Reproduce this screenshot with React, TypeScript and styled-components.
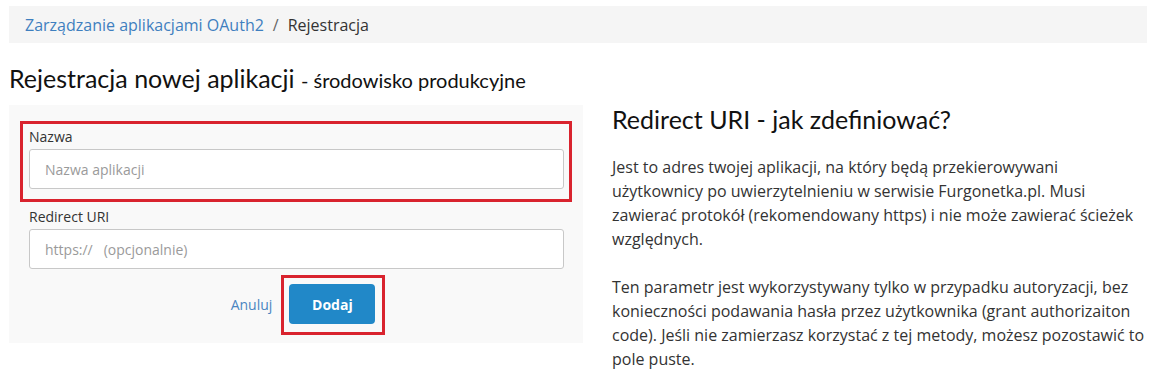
import React from "react";
import styled, { createGlobalStyle } from "styled-components";

const Global = createGlobalStyle`
  html, body { margin: 0; padding: 0; background: #fff; }
  body { font-family: "Open Sans", "Noto Sans", sans-serif; color: #333; }
  * { box-sizing: border-box; }
`;

const Page = styled.div`
  padding: 6px 8px 0 9px;
  width: 1155px;
`;

const Breadcrumb = styled.nav`
  display: flex;
  align-items: center;
  gap: 9px;
  height: 37px;
  padding: 0 16px;
  background: #f5f5f5;
  font-size: 16px;
`;

const Crumb = styled.a`
  color: #3f7fbf;
  text-decoration: none;
`;

const Sep = styled.span`
  color: #666;
`;

const Current = styled.span`
  color: #333;
`;

const Title = styled.h1`
  margin: 20px 0 0;
  height: 42px;
  font-family: Lato, "Open Sans", sans-serif;
  font-weight: 400;
  font-size: 25px;
  line-height: 30px;
  color: #111;
`;

const Sub = styled.small`
  font-size: 20px;
`;

const Row = styled.div`
  display: grid;
  grid-template-columns: 574px 1fr;
  align-items: start;
  gap: 29px;
`;

const Panel = styled.form`
  background: #f9f9f9;
  padding: 22px 19px 19px 20px;
  display: flex;
  flex-direction: column;
`;

const Field = styled.div<{ $mark?: boolean }>`
  position: relative;
  display: flex;
  flex-direction: column;
  gap: 2px;
  margin-bottom: ${(p) => (p.$mark ? "18px" : "15px")};
  ${(p) =>
    p.$mark &&
    `&::after {
      content: "";
      position: absolute;
      inset: -6px -8px -13px -9px;
      border: 3px solid #d9232e;
      pointer-events: none;
    }`}
`;

const Label = styled.label`
  font-size: 14px;
  line-height: 20px;
  color: #333;
`;

const Input = styled.input`
  height: 40px;
  border: 1px solid #c8c8c8;
  border-radius: 3px;
  background: #fff;
  padding: 0 15px;
  font-family: "Open Sans", sans-serif;
  font-size: 14px;
  color: #333;
  &::placeholder { color: #9a9a9a; }
`;

const Actions = styled.div`
  display: flex;
  justify-content: center;
  align-items: center;
  gap: 17px;
  padding-left: 13px;
`;

const Cancel = styled.a`
  color: #4a86c1;
  font-size: 14px;
  text-decoration: none;
`;

const Marked = styled.div`
  position: relative;
  &::after {
    content: "";
    position: absolute;
    inset: -9px -10px -11px -8px;
    border: 3px solid #d9232e;
    pointer-events: none;
  }
`;

const Button = styled.button`
  width: 86px;
  height: 40px;
  border: 0;
  border-radius: 4px;
  background: #2188c8;
  color: #fff;
  font-family: "Open Sans", sans-serif;
  font-weight: 700;
  font-size: 14px;
`;

const Side = styled.section`
  padding-top: 0;
`;

const SideTitle = styled.h2`
  margin: 0 0 22px;
  font-family: Lato, "Open Sans", sans-serif;
  font-weight: 400;
  font-size: 25px;
  line-height: 28px;
  color: #111;
`;

const Para = styled.p`
  margin: 0 0 24px;
  font-size: 16px;
  line-height: 24px;
  color: #333;
`;

export default function App() {
  return (
    <Page>
      <Global />
      <Breadcrumb>
        <Crumb href="#">Zarządzanie aplikacjami OAuth2</Crumb>
        <Sep>/</Sep>
        <Current>Rejestracja</Current>
      </Breadcrumb>
      <Title>
        Rejestracja nowej aplikacji <Sub>- środowisko produkcyjne</Sub>
      </Title>
      <Row>
        <Panel onSubmit={(e) => e.preventDefault()}>
          <Field $mark>
            <Label>Nazwa</Label>
            <Input placeholder="Nazwa aplikacji" />
          </Field>
          <Field>
            <Label>Redirect URI</Label>
            <Input placeholder="https://   (opcjonalnie)" />
          </Field>
          <Actions>
            <Cancel href="#">Anuluj</Cancel>
            <Marked>
              <Button type="submit">Dodaj</Button>
            </Marked>
          </Actions>
        </Panel>
        <Side>
          <SideTitle>Redirect URI - jak zdefiniować?</SideTitle>
          <Para>
            Jest to adres twojej aplikacji, na który będą przekierowywani
            użytkownicy po uwierzytelnieniu w serwisie Furgonetka.pl. Musi
            zawierać protokół (rekomendowany https) i nie może zawierać ścieżek
            względnych.
          </Para>
          <Para>
            Ten parametr jest wykorzystywany tylko w przypadku autoryzacji, bez
            konieczności podawania hasła przez użytkownika (grant authorizaiton
            code). Jeśli nie zamierzasz korzystać z tej metody, możesz pozostawić
            to pole puste.
          </Para>
        </Side>
      </Row>
    </Page>
  );
}
